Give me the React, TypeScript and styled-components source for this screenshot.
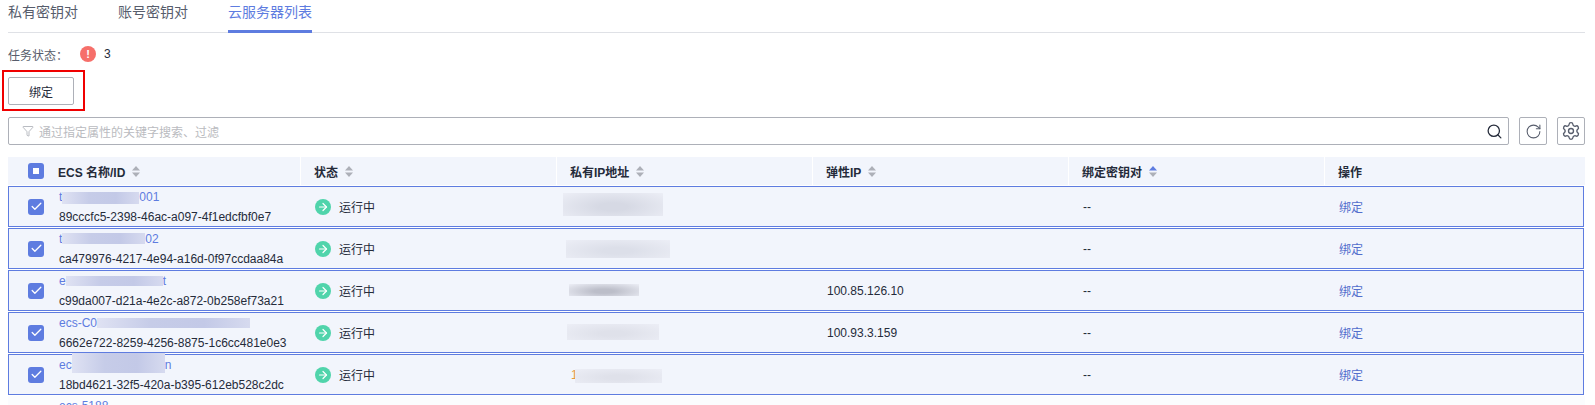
import styled, { createGlobalStyle } from "styled-components";
import { Funnel, Search, RotateCw, Settings, ArrowRight, Check } from "lucide-react";

const GlobalStyle = createGlobalStyle`
  html, body {
    margin: 0;
    height: 405px;
    overflow: hidden;
    background: #fff;
  }
  body {
    font-family: "Liberation Sans", "Noto Sans CJK SC", sans-serif;
    font-size: 12px;
    color: #252b3a;
  }
`;

const Page = styled.div`
  width: 1595px;
  height: 405px;
  overflow: hidden;
  box-sizing: border-box;
  padding: 0 10px 0 8px;
`;

const Tabs = styled.div`
  display: flex;
  gap: 40px;
  height: 33px;
  box-sizing: border-box;
  border-bottom: 1px solid #dfe1e6;
`;

const Tab = styled.div<{ $active?: boolean }>`
  height: 33px;
  box-sizing: border-box;
  line-height: 24px;
  font-size: 14px;
  color: ${(p) => (p.$active ? "#5e7ce0" : "#575d6c")};
  border-bottom: ${(p) => (p.$active ? "3px solid #5e7ce0" : "none")};
`;

const StatusLine = styled.div`
  display: flex;
  align-items: center;
  height: 20px;
  margin-top: 11px;
  color: #575d6c;
`;

const StatusLabel = styled.span`
  width: 72px;
`;

const AlertDot = styled.span`
  width: 16px;
  height: 16px;
  border-radius: 50%;
  background: #f66f6a;
  color: #fff;
  font-size: 11px;
  font-weight: 700;
  line-height: 16px;
  text-align: center;
`;

const AlertCount = styled.span`
  margin-left: 8px;
  color: #252b3a;
`;

const HighlightRow = styled.div`
  height: 47px;
`;

const Highlight = styled.div`
  display: inline-block;
  vertical-align: top;
  margin: 6px 0 0 -6px;
  padding: 5px 9px 4px 4px;
  border: 2px solid #f00000;
`;

const BindButton = styled.button`
  display: block;
  width: 66px;
  height: 28px;
  padding: 0;
  background: #fff;
  border: 1px solid #adb0b8;
  border-radius: 2px;
  font: inherit;
  color: #252b3a;
`;

const SearchRow = styled.div`
  display: flex;
  gap: 10px;
  margin-top: 6px;
`;

const SearchBox = styled.div`
  flex: 1;
  height: 28px;
  box-sizing: border-box;
  display: flex;
  align-items: center;
  padding: 0 5px 0 13px;
  border: 1px solid #adb0b8;
  border-radius: 2px;
  color: #babbc0;
`;

const SearchHint = styled.span`
  flex: 1;
  margin-left: 5px;
`;

const IconButton = styled.div`
  width: 28px;
  height: 28px;
  box-sizing: border-box;
  display: flex;
  align-items: center;
  justify-content: center;
  border: 1px solid #adb0b8;
  border-radius: 2px;
  color: #575d6c;
`;

const HeadRow = styled.div`
  display: grid;
  grid-template-columns: 292px 256px 256px 256px 256px 261px;
  height: 28px;
  margin-top: 12px;
  margin-bottom: 1px;
  background: #f2f5fc;
`;

const HeadCell = styled.div`
  display: flex;
  align-items: center;
  gap: 7px;
  padding-left: 13px;
  border-left: 1px solid #fff;
  font-weight: 700;
  color: #252b3a;
`;

const HeadSelectCell = styled(HeadCell)`
  padding-left: 20px;
  border-left: none;
`;

const Box = styled.span<{ $mr?: number }>`
  flex: none;
  width: 16px;
  height: 16px;
  margin-right: ${(p) => p.$mr ?? 0}px;
  border-radius: 3px;
  background: #5e7ce0;
  color: #fff;
  display: flex;
  align-items: center;
  justify-content: center;
`;

const BoxDot = styled.span`
  width: 6px;
  height: 6px;
  background: #fff;
`;

const Row = styled.div`
  display: grid;
  grid-template-columns: 291px 256px 256px 256px 256px 259px;
  width: 1576px;
  height: 41px;
  box-sizing: border-box;
  margin-bottom: 1px;
  background: #f2f5fc;
  border: 1px solid #5e7ce0;
`;

const NextRow = styled.div`
  height: 9px;
  padding: 3px 0 0 51px;
  background: #fbfcfe;
  color: #5e7ce0;
  line-height: 14px;
`;

const Cell = styled.div`
  display: flex;
  align-items: center;
  padding-left: 15px;
  min-width: 0;
  color: #252b3a;
`;

const NameCell = styled(Cell)`
  padding-left: 19px;
`;

const NameStack = styled.div`
  margin-left: 15px;
`;

const NameLine = styled.div`
  height: 20px;
  line-height: 21px;
  white-space: nowrap;
  color: #5e7ce0;
`;

const IdLine = styled.div`
  height: 19px;
  line-height: 20px;
  white-space: nowrap;
  color: #252b3a;
`;

const NameSmudge = styled.span<{ $w: number; $h: number; $top?: number }>`
  display: inline-block;
  position: relative;
  top: ${(p) => p.$top ?? 0}px;
  width: ${(p) => p.$w}px;
  height: ${(p) => p.$h}px;
  vertical-align: middle;
  background: linear-gradient(90deg, #dfe2f3 0%, #c6cce8 35%, #c3c9e7 70%, #d6daef 100%);
`;

const AddressSmudge = styled.span<{ $w: number; $h: number; $ml: number; $top?: number; $tone?: string }>`
  display: block;
  flex: none;
  position: relative;
  top: ${(p) => p.$top ?? 0}px;
  width: ${(p) => p.$w}px;
  height: ${(p) => p.$h}px;
  margin-left: ${(p) => p.$ml}px;
  background: radial-gradient(
    ellipse at 50% 60%,
    ${(p) => p.$tone ?? "#d9dce6"} 20%,
    #eceef6 100%
  );
`;

const OrangeDigit = styled.span`
  color: #e89a3c;
`;

const RunDot = styled.span`
  flex: none;
  width: 16px;
  height: 16px;
  margin-right: 8px;
  border-radius: 50%;
  background: #50d4ab;
  color: #fff;
  display: flex;
  align-items: center;
  justify-content: center;
`;

const ActionLink = styled.span`
  color: #526ecc;
`;

const SortIcon = ({ active }: { active?: boolean }) => (
  <svg width="8" height="11" viewBox="0 0 8 11">
    <path d="M4 0 L8 4.5 H0 Z" fill={active ? "#5e7ce0" : "#adb0b8"} />
    <path d="M4 11 L8 6.5 H0 Z" fill="#adb0b8" />
  </svg>
);

const rows = [
  {
    pre: "t", name: { w: 77, h: 12, top: 0 }, post: "001", id: "89cccfc5-2398-46ac-a097-4f1edcfbf0e7",
    addr: { w: 100, h: 23, ml: -8, top: -2, tone: "#d6d9e4" },
  },
  {
    pre: "t", name: { w: 83, h: 11, top: -1 }, post: "02", id: "ca479976-4217-4e94-a16d-0f97ccdaa84a",
    addr: { w: 104, h: 18, ml: -5, top: 0, tone: "#dcdfe9" },
  },
  {
    pre: "e", name: { w: 97, h: 10, top: -1 }, post: "t", id: "c99da007-d21a-4e2c-a872-0b258ef73a21", ip: "100.85.126.10",
    addr: { w: 70, h: 12, ml: -2, top: -1, tone: "#bcbec9" },
  },
  {
    pre: "ecs-C0", name: { w: 153, h: 10, top: -1 }, post: "", id: "6662e722-8259-4256-8875-1c6cc481e0e3", ip: "100.93.3.159",
    addr: { w: 92, h: 16, ml: -4, top: -1, tone: "#dfe1ea" },
  },
  {
    pre: "ec", name: { w: 93, h: 20, top: -3 }, post: "n", id: "18bd4621-32f5-420a-b395-612eb528c2dc",
    addr: { w: 87, h: 14, ml: -3, top: 1, tone: "#dfe1ea" },
    digit: "1",
  },
];

function App() {
  return (
    <Page>
      <GlobalStyle />
      <Tabs>
        <Tab>私有密钥对</Tab>
        <Tab>账号密钥对</Tab>
        <Tab $active>云服务器列表</Tab>
      </Tabs>
      <StatusLine>
        <StatusLabel>任务状态：</StatusLabel>
        <AlertDot>!</AlertDot>
        <AlertCount>3</AlertCount>
      </StatusLine>
      <HighlightRow>
        <Highlight>
          <BindButton>绑定</BindButton>
        </Highlight>
      </HighlightRow>
      <SearchRow>
        <SearchBox>
          <Funnel size={12} strokeWidth={1.2} color="#8a8e99" />
          <SearchHint>通过指定属性的关键字搜索、过滤</SearchHint>
          <Search size={17} strokeWidth={1.8} color="#252b3a" />
        </SearchBox>
        <IconButton>
          <RotateCw size={17} strokeWidth={1.5} />
        </IconButton>
        <IconButton>
          <Settings size={20} strokeWidth={1.6} />
        </IconButton>
      </SearchRow>
      <HeadRow>
        <HeadSelectCell>
          <Box $mr={7}>
            <BoxDot />
          </Box>
          ECS 名称/ID
          <SortIcon />
        </HeadSelectCell>
        <HeadCell>状态<SortIcon /></HeadCell>
        <HeadCell>私有IP地址<SortIcon /></HeadCell>
        <HeadCell>弹性IP<SortIcon /></HeadCell>
        <HeadCell>绑定密钥对<SortIcon active /></HeadCell>
        <HeadCell>操作</HeadCell>
      </HeadRow>
      {rows.map((r) => (
        <Row key={r.id}>
          <NameCell>
            <Box>
              <Check size={13} strokeWidth={2.4} />
            </Box>
            <NameStack>
              <NameLine>
                {r.pre}
                <NameSmudge $w={r.name.w} $h={r.name.h} $top={r.name.top} />
                {r.post}
              </NameLine>
              <IdLine>{r.id}</IdLine>
            </NameStack>
          </NameCell>
          <Cell>
            <RunDot>
              <ArrowRight size={12} strokeWidth={2.4} />
            </RunDot>
            运行中
          </Cell>
          <Cell>
            {r.digit && <OrangeDigit>{r.digit}</OrangeDigit>}
            <AddressSmudge
              $w={r.addr.w}
              $h={r.addr.h}
              $ml={r.addr.ml}
              $top={r.addr.top}
              $tone={r.addr.tone}
            />
          </Cell>
          <Cell>{r.ip}</Cell>
          <Cell>--</Cell>
          <Cell>
            <ActionLink>绑定</ActionLink>
          </Cell>
        </Row>
      ))}
      <NextRow>ecs-5188</NextRow>
    </Page>
  );
}

export default App;
